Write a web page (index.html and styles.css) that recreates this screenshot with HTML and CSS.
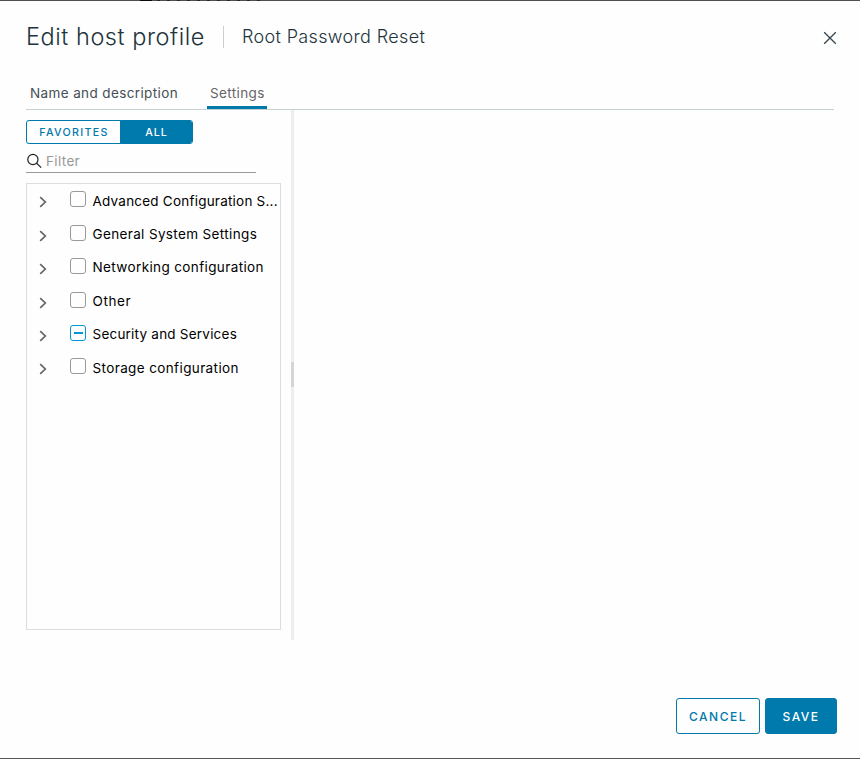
FILE: index.html
```html
<!DOCTYPE html>
<html lang="en">
<head>
<meta charset="utf-8">
<title>Edit host profile</title>
<link rel="stylesheet" href="styles.css">
</head>
<body>
<div class="dialog">
  <div class="backdrop-edge"></div>
  <header class="header">
    <h1 class="title">Edit host profile</h1>
    <span class="subtitle">Root Password Reset</span>
    <button class="close" aria-label="Close"><svg width="14" height="14" viewBox="0 0 14 14"><path d="M1.2 1.2 12.8 12.8M12.8 1.2 1.2 12.8"/></svg></button>
  </header>
  <nav class="tabs">
    <a class="tab tab-name">Name and description</a>
    <a class="tab tab-settings active">Settings</a>
  </nav>
  <main class="content">
    <section class="sidebar">
      <div class="toggle"><button class="seg fav">FAVORITES</button><button class="seg all">ALL</button></div>
      <label class="filter"><svg width="16" height="16" viewBox="0 0 16 16"><circle cx="6.9" cy="6.5" r="5.1"/><path d="M10.6 10.2 15.2 14.6"/></svg><span>Filter</span></label>
      <ul class="tree">
        <li class="row"><svg class="caret" width="8" height="12" viewBox="0 0 8 12"><path d="M1.2 1.2 6.3 6 1.2 10.8"/></svg><i class="box"></i><span class="r1">Advanced Configuration S...</span></li>
        <li class="row"><svg class="caret" width="8" height="12" viewBox="0 0 8 12"><path d="M1.2 1.2 6.3 6 1.2 10.8"/></svg><i class="box"></i><span class="r2">General System Settings</span></li>
        <li class="row"><svg class="caret" width="8" height="12" viewBox="0 0 8 12"><path d="M1.2 1.2 6.3 6 1.2 10.8"/></svg><i class="box"></i><span class="r3">Networking configuration</span></li>
        <li class="row"><svg class="caret" width="8" height="12" viewBox="0 0 8 12"><path d="M1.2 1.2 6.3 6 1.2 10.8"/></svg><i class="box"></i><span class="r4">Other</span></li>
        <li class="row"><svg class="caret" width="8" height="12" viewBox="0 0 8 12"><path d="M1.2 1.2 6.3 6 1.2 10.8"/></svg><i class="box partial"></i><span class="r5">Security and Services</span></li>
        <li class="row"><svg class="caret" width="8" height="12" viewBox="0 0 8 12"><path d="M1.2 1.2 6.3 6 1.2 10.8"/></svg><i class="box"></i><span class="r6">Storage configuration</span></li>
      </ul>
    </section>
    <div class="splitter"><div class="grip"></div></div>
  </main>
  <footer class="footer"><button class="btn cancel">CANCEL</button><button class="btn save">SAVE</button></footer>
</div>
</body>
</html>
```
FILE: styles.css
```css
* { box-sizing: border-box; }
body { margin: 0; background: #fff; font-family: Inter, "Liberation Sans", sans-serif; }
button { font: inherit; padding: 0; margin: 0; background: none; border: 0; }
svg { display: block; fill: none; flex: none; }
.dialog { position: relative; width: 860px; height: 759px; background: #fefefe; border-top: 1px solid #4f4f4f; border-bottom: 1px solid #565656; padding: 0 26px; display: flex; flex-direction: column; }
/* Sliver of the dimmed page heading behind the dialog's top edge */
.backdrop-edge { position: absolute; top: -1px; left: 140px; width: 123px; height: 1px; background: linear-gradient(90deg, #090909 12px, transparent 12px), repeating-linear-gradient(90deg, #4f4f4f 0 7px, #24272c 7px 10px); }
.header { height: 77px; display: flex; align-items: flex-start; padding-top: 21px; width: 811px; flex: none; }
.title { margin: 0; width: 197px; font-size: 23.5px; font-weight: 300; line-height: 30px; color: #21333b; white-space: nowrap; letter-spacing: 0.55px; }
.subtitle { margin-top: 4px; border-left: 1px solid #ccc; padding-left: 18px; height: 22px; line-height: 21px; font-size: 18px; font-weight: 300; letter-spacing: 0.35px; color: #21333b; white-space: nowrap; }
.close { margin: 9px 0 0 auto; }
.close svg { stroke: #34444d; stroke-width: 1.3; }
.tabs { height: 32px; flex: none; display: flex; box-shadow: inset 0 -1px #c5d1d3; width: 808px; }
.tab { height: 31px; line-height: 30px; font-size: 13.5px; letter-spacing: 0.38px; color: #454f55; white-space: nowrap; }
.tab-name { padding-left: 4px; width: 181px; }
.tab-settings { padding-left: 3px; width: 60px; color: #666; border-bottom: 3px solid #0079ad; }
.content { height: 530px; flex: none; display: flex; }
.sidebar { width: 265px; padding-top: 10px; }
.toggle { display: flex; width: 167px; height: 24px; border: 1px solid #0079ad; border-radius: 3px; overflow: hidden; }
.seg { font-size: 10.7px; line-height: 22px; padding-top: 1px; font-weight: 500; color: #0079ad; letter-spacing: 1.3px; }
.fav { width: 93px; padding-left: 1px; }
.all { flex: 1; background: #0079ad; color: #fff; letter-spacing: 1px; padding-left: 1px; }
.filter { display: flex; align-items: center; width: 230px; height: 29px; border-bottom: 1px solid #999; padding: 6px 0 0 0; font-size: 13.5px; letter-spacing: 0.35px; color: #999; }
.filter svg { stroke: #222; stroke-width: 1.2; margin-right: 4px; }
.tree { list-style: none; margin: 10px 0 0; padding: 0; width: 255px; height: 447px; border: 1px solid #ddd; }
.row { display: flex; height: 33.4px; padding-left: 12px; font-size: 13.5px; line-height: 20px; color: #000; white-space: nowrap; }
.caret { margin-top: 12.4px; stroke: #666; stroke-width: 1.7; }
.box { width: 16px; height: 16px; margin: 7.4px 6.5px 0 23px; border: 1px solid #999; border-radius: 3px; flex: none; }
.partial { border-color: #0095d3; padding: 6px 2px 6px 3px; }
.partial::before { content: ""; display: block; height: 2px; background: #0095d3; }
.row span { margin-top: 6.6px; }
.r1, .r5 { letter-spacing: 0.22px; }
.r2 { letter-spacing: 0.36px; }
.r3, .r6 { letter-spacing: 0.38px; }
.r4 { letter-spacing: 0.6px; }
.splitter { width: 3px; background: #eee; padding-top: 252px; }
.grip { height: 25px; background: #d5d5d5; }
.footer { display: flex; gap: 5px; margin: 58px 0 0 650px; }
.btn { height: 36px; border: 1px solid #0079ad; border-radius: 3px; font-size: 12px; font-weight: 500; letter-spacing: 1.5px; color: #0079ad; flex: none; }
.cancel { width: 84px; }
.save { width: 72px; background: #0079ad; color: #fff; }
```
